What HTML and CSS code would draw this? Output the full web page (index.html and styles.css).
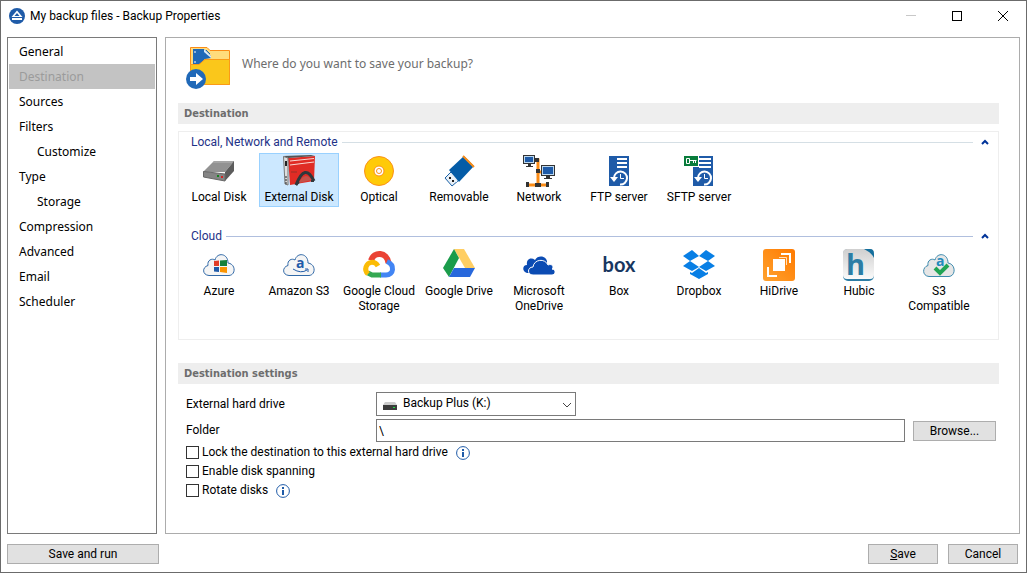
FILE: index.html
```html
<!DOCTYPE html>
<html lang="en">
<head>
    <meta charset="UTF-8">
    <meta name="viewport" content="width=device-width, initial-scale=1.0">
    <title>My backup files - Backup Properties</title>
    <link rel="stylesheet" href="styles.css">
</head>
<body>
    <div class="window">
        <header class="titlebar">
            <svg class="app-icon" width="16" height="16" viewBox="0 0 16 16">
                <circle cx="8" cy="8" r="8" fill="#1f5ba8"/>
                <path d="M8 2.500 L13.500 9 H2.500 Z" fill="#fff"/>
                <path d="M8 5 L10.500 8 H5.500 Z" fill="#1f5ba8"/>
                <rect x="3" y="10" width="10" height="2" fill="#fff"/>
            </svg>
            <h1>My backup files - Backup Properties</h1>
            <div class="window-controls">
                <button type="button" aria-label="Minimize" disabled><svg width="10" height="10"><path d="M0 4.500H10" stroke="#c8c8c8"/></svg></button>
                <button type="button" aria-label="Maximize"><svg width="10" height="10"><rect x=".5" y=".5" width="9" height="9" fill="none" stroke="#000"/></svg></button>
                <button type="button" aria-label="Close"><svg width="10" height="10"><path d="M0 0L10 10M10 0L0 10" stroke="#000"/></svg></button>
            </div>
        </header>

        <div class="content">
            <nav class="sidebar">
                <a href="#">General</a>
                <a href="#" class="active">Destination</a>
                <a href="#">Sources</a>
                <a href="#">Filters</a>
                <a href="#" class="sub">Customize</a>
                <a href="#">Type</a>
                <a href="#" class="sub">Storage</a>
                <a href="#">Compression</a>
                <a href="#">Advanced</a>
                <a href="#">Email</a>
                <a href="#">Scheduler</a>
            </nav>

            <main class="panel">
                <div class="question">
                    <svg width="44" height="42" viewBox="0 0 44 42">
                        <path d="M4.500 37.500V.500H21L24 3.500H43.500V37.500Z" fill="#ffdc7c" stroke="#fb8c16"/>
                        <path d="M7 2H18L25 9V11L19 12L14 17H7Z" fill="#2069b8"/>
                        <path d="M18 2L25 9V11L18 5Z" fill="#dceaf7"/>
                        <path d="M20 3L24 7" stroke="#2069b8"/>
                        <path d="M9 4V6M9 14V16" stroke="#fff"/>
                        <path d="M4.500 37.500V17.500H13L19 12.500H43.500V37.500Z" fill="#fac71b" stroke="#fb9a16"/>
                        <circle cx="10" cy="32" r="10" fill="#2069b8"/>
                        <path d="M4 30H10V26L17 32L10 38V34H4Z" fill="#fff"/>
                    </svg>
                    <p>Where do you want to save your backup?</p>
                </div>

                <h2 class="section-title">Destination</h2>
                <div class="destinations">
                    <div class="group-title">
                        <h3>Local, Network and Remote</h3>
                        <span class="rule"></span>
                        <button type="button" aria-label="Collapse Local, Network and Remote"><svg width="8" height="6"><path d="M1 5L4 2L7 5" fill="none" stroke="#003399" stroke-width="2"/></svg></button>
                    </div>
                    <div class="items">
                        <button type="button" class="item">
                            <svg width="32" height="32" viewBox="0 0 32 32">
                                <path d="M11 6H31L22 17H0Z" fill="#929292"/>
                                <path d="M11 6H31L29 8H10Z" fill="#a5a5a5"/>
                                <path d="M31 6V16L22 26V17Z" fill="#5c5c5c"/>
                                <path d="M.500 16.500L22 19V26L.500 22Z" fill="#858585" stroke="#686868"/>
                                <rect x="14" y="20" width="2" height="2" fill="#16831d"/>
                                <rect x="18" y="21" width="2" height="2" fill="#d22424"/>
                            </svg>
                            <span>Local Disk</span>
                        </button>
                        <button type="button" class="item selected">
                            <svg width="32" height="32" viewBox="0 0 32 32">
                                <path d="M5 3L32 1L31 26L7 30Z" fill="#e02c25"/>
                                <path d="M0 1L28 0L32 1L5 3Z" fill="#545454"/>
                                <path d="M7 6L31 3.500M7 10L31 7" stroke="#f9d8d3"/>
                                <path d="M8 17H14" stroke="#963028"/>
                                <path d="M.500 1.500L5 3V30L2 29Z" fill="#dedede" stroke="#777"/>
                                <path d="M3 6V11" stroke="#222" stroke-width="2"/>
                                <path d="M2 22H4M2 25H4M2 28H4" stroke="#222"/>
                                <path d="M16 27Q22 16 29 25L16 28Z" fill="#c4524a"/>
                                <path d="M13 30Q22 7 31 26" fill="none" stroke="#30383c" stroke-width="3"/>
                                <path d="M13 30L16 27M31 26L28 26" stroke="#30383c" stroke-width="2"/>
                            </svg>
                            <span>External Disk</span>
                        </button>
                        <button type="button" class="item">
                            <svg width="32" height="32" viewBox="0 0 32 32">
                                <circle cx="16" cy="16" r="14.500" fill="#ffca08" stroke="#fb9118"/>
                                <circle cx="16" cy="16" r="5" fill="#fff" stroke="#fb9118"/>
                                <circle cx="16" cy="16" r="2.500" fill="#fff" stroke="#fb9118"/>
                            </svg>
                            <span>Optical</span>
                        </button>
                        <button type="button" class="item">
                            <svg width="32" height="32" viewBox="0 0 32 32">
                                <path d="M2 23L8 17L16 25L9 31Z" fill="#e8eff6" stroke="#1961a7"/>
                                <path d="M6 15L21 1L31 11L16 27Z" fill="#045ca7"/>
                                <path d="M20 1L31 12" stroke="#fb8c16" stroke-width="2"/>
                                <path d="M6 22H8V24H6ZM9 25H11V27H9Z" fill="#222"/>
                                <path d="M5 18L14 27" stroke="#eef6fc"/>
                            </svg>
                            <span>Removable</span>
                        </button>
                        <button type="button" class="item">
                            <svg width="32" height="32" viewBox="0 0 32 32">
                                <path d="M13 5H15V29M15 17H18M6 30H24" fill="none" stroke="#fb8c16" stroke-width="3"/>
                                <path d="M12 3H16V7H12ZM13 14H17V18H13ZM12 28H18V32H12ZM3 27H6V32H3ZM23 27H26V32H23Z" fill="#333"/>
                                <rect x=".5" y=".5" width="11" height="8" fill="#bcd8ef" stroke="#333"/>
                                <rect x="2" y="2" width="8" height="5" fill="#1f5ba8"/>
                                <path d="M5 9H8V11H10V12H3V11H5Z" fill="#333"/>
                                <rect x="18.500" y="10.500" width="13" height="10" fill="#bcd8ef" stroke="#333"/>
                                <rect x="20" y="12" width="10" height="7" fill="#1f5ba8"/>
                                <path d="M23 21H27V23H29V24H21V23H23Z" fill="#333"/>
                            </svg>
                            <span>Network</span>
                        </button>
                        <button type="button" class="item">
                            <svg width="32" height="32" viewBox="0 0 32 32">
                                <rect x="6" y="1" width="20" height="30" fill="#1f5ba8"/>
                                <path d="M14 4H24M14 8H24M14 12H24" stroke="#fff" stroke-width="2"/>
                                <path d="M11 23A6.500 6.500 0 1 1 17 29.500" fill="none" stroke="#fff" stroke-width="2"/>
                                <path d="M7 22H15L11 27Z" fill="#fff"/>
                                <path d="M17.500 19V23.500H21" fill="none" stroke="#fff"/>
                            </svg>
                            <span>FTP server</span>
                        </button>
                        <button type="button" class="item">
                            <svg width="32" height="32" viewBox="0 0 32 32">
                                <rect x="10" y="1" width="20" height="30" fill="#1f5ba8"/>
                                <path d="M16 4H28M16 8H28M16 12H28" stroke="#fff" stroke-width="2"/>
                                <path d="M15 23A6.500 6.500 0 1 1 21 29.500" fill="none" stroke="#fff" stroke-width="2"/>
                                <path d="M11 22H19L15 27Z" fill="#fff"/>
                                <path d="M21.500 19V23.500H25" fill="none" stroke="#fff"/>
                                <path d="M0 0H16V12H0Z" fill="#fff"/>
                                <path d="M1 1H15V11H1Z" fill="#087c3b"/>
                                <path d="M3.500 3.500H6.500V8.500H3.500ZM7 5.500H13.500M10.500 6V8M12.500 6V8" fill="none" stroke="#fff"/>
                            </svg>
                            <span>SFTP server</span>
                        </button>
                    </div>

                    <div class="group-title cloud">
                        <h3>Cloud</h3>
                        <span class="rule"></span>
                        <button type="button" aria-label="Collapse Cloud"><svg width="8" height="6"><path d="M1 5L4 2L7 5" fill="none" stroke="#003399" stroke-width="2"/></svg></button>
                    </div>
                    <div class="items">
                        <button type="button" class="item">
                            <svg width="32" height="32" viewBox="0 0 32 32">
                                <path d="M6 26.500C-1 26 -1 18 5 16.500C4 11 9 9 12 11C14 3 25 4 25 14C33 15 33 26 26 26.500Z" fill="#f5f5f5" stroke="#3169a7"/>
                                <path d="M11 12L16 11.500V17H11Z" fill="#e23d28"/>
                                <path d="M17 11.500L24 11V17H17Z" fill="#16803a"/>
                                <path d="M11 18H16V23L11 22.500Z" fill="#1f5ba8"/>
                                <path d="M17 18H24V24L17 23Z" fill="#fb9400"/>
                            </svg>
                            <span>Azure</span>
                        </button>
                        <button type="button" class="item">
                            <svg width="32" height="32" viewBox="0 0 32 32">
                                <path d="M6 26.500C-1 26 -1 18 5 16.500C4 11 9 9 12 11C14 3 25 4 25 14C33 15 33 26 26 26.500Z" fill="#f5f5f5" stroke="#3169a7"/>
                                <text x="13" y="19" class="cloud-letter" fill="#1f5ba8">a</text>
                                <path d="M10 20Q18 25 24 21M22 20H25V23" fill="none" stroke="#1f5ba8"/>
                            </svg>
                            <span>Amazon S3</span>
                        </button>
                        <button type="button" class="item">
                            <svg width="32" height="32" viewBox="0 0 32 32">
                                <path d="M8 11.500C11 2 24 3 25.500 14" fill="none" stroke="#ea4335" stroke-width="6"/>
                                <path d="M24 12.500C32 16 31 26 23 26H17" fill="none" stroke="#4285f4" stroke-width="5"/>
                                <path d="M18 26H9L5 24" fill="none" stroke="#34a853" stroke-width="5"/>
                                <path d="M15 17C12 12 5 12 3 18C2 21 3 23 5 25" fill="none" stroke="#fbbc05" stroke-width="5"/>
                            </svg>
                            <span>Google Cloud Storage</span>
                        </button>
                        <button type="button" class="item">
                            <svg width="32" height="32" viewBox="0 0 32 32">
                                <path d="M11 0H21L32 19H22Z" fill="#ffce63"/>
                                <path d="M11 0L16 9L6 28L0 19Z" fill="#1b9c4b"/>
                                <path d="M11 19H32L27 28H6Z" fill="#2868dc"/>
                            </svg>
                            <span>Google Drive</span>
                        </button>
                        <button type="button" class="item">
                            <svg width="32" height="32" viewBox="0 0 32 32">
                                <path d="M4 24C-1 23 -1 16 4 16C3 10 8 8 12 11C15 5 25 7 24 14L20 24Z" fill="#0b4bb3"/>
                                <path d="M10 26C4 26 4 18 10 18C11 10 22 9 25 16C30 14 31 19 29 20C34 21 32 26 29 26Z" fill="#0b4bb3" stroke="#fff"/>
                            </svg>
                            <span>Microsoft OneDrive</span>
                        </button>
                        <button type="button" class="item">
                            <svg width="32" height="32" viewBox="0 0 32 32">
                                <text x="16" y="23" text-anchor="middle" class="box-logo">box</text>
                            </svg>
                            <span>Box</span>
                        </button>
                        <button type="button" class="item">
                            <svg width="32" height="32" viewBox="0 0 32 32" fill="#087fe5">
                                <path d="M9 1L16 7L7 12L0 7Z"/>
                                <path d="M23 1L32 7L25 12L16 7Z"/>
                                <path d="M0 17L7 12L16 18L9 22Z"/>
                                <path d="M25 12L32 17L23 22L16 18Z"/>
                                <path d="M7 23L9 24L16 19L23 24L25 23V25L16 30L7 25Z"/>
                            </svg>
                            <span>Dropbox</span>
                        </button>
                        <button type="button" class="item">
                            <svg width="32" height="32" viewBox="0 0 32 32">
                                <defs>
                                    <linearGradient id="hidrive" x1="0" y1="1" x2="1" y2="0"><stop stop-color="#ffa22e"/><stop offset="1" stop-color="#ff7a00"/></linearGradient>
                                </defs>
                                <rect width="32" height="32" rx="3" fill="url(#hidrive)"/>
                                <rect x="10" y="10" width="12" height="12" fill="#fff"/>
                                <path d="M5 18V27H14M18 5H27V14" fill="none" stroke="#fff" stroke-width="2"/>
                                <path d="M16 8.500H23.500V16" fill="none" stroke="#ffe0bd"/>
                            </svg>
                            <span>HiDrive</span>
                        </button>
                        <button type="button" class="item">
                            <svg width="32" height="32" viewBox="0 0 32 32">
                                <defs>
                                    <linearGradient id="hubic" x2="0" y2="1"><stop stop-color="#cfcfcf"/><stop offset="1" stop-color="#fafafa"/></linearGradient>
                                </defs>
                                <rect width="31" height="32" rx="5" fill="#2c7da5"/>
                                <rect width="31" height="30" rx="4" fill="url(#hubic)"/>
                                <path d="M21 0H27Q31 0 31 5V9Q29 4 21 0Z" fill="#146f9d"/>
                                <text x="3" y="26" class="hubic-letter">h</text>
                            </svg>
                            <span>Hubic</span>
                        </button>
                        <button type="button" class="item">
                            <svg width="32" height="32" viewBox="0 0 32 32">
                                <path d="M6 27.500C-1 27 -1 18 5 16.500C4 11 9 9 12 11C14 3 25 4 25 14C33 15 33 27 26 27.500Z" fill="#e6e6e6" stroke="#3c8aae"/>
                                <text x="13" y="17" class="cloud-letter" fill="#238abc">a</text>
                                <path d="M12 19L17 24L25 16" fill="none" stroke="#21a454" stroke-width="4"/>
                            </svg>
                            <span>S3<br>Compatible</span>
                        </button>
                    </div>
                </div>

                <h2 class="section-title">Destination settings</h2>
                <form class="settings">
                    <div class="field">
                        <label for="drive">External hard drive</label>
                        <div class="drive-select">
                            <svg class="drive-icon" width="14" height="8" viewBox="0 0 14 8">
                                <path d="M2 0H12L14 3H0Z" fill="#ccc"/>
                                <rect y="3" width="14" height="5" fill="#3b3b3b"/>
                                <rect x="10" y="5" width="2" height="1" fill="#1be342"/>
                            </svg>
                            <select id="drive" name="drive">
                                <option>Backup Plus (K:)</option>
                            </select>
                            <svg class="arrow" width="10" height="6"><path d="M1 1L5 5L9 1" fill="none" stroke="#444"/></svg>
                        </div>
                    </div>
                    <div class="field">
                        <label for="folder">Folder</label>
                        <input type="text" id="folder" name="folder" value="\">
                        <button type="button" class="btn btn-browse">Browse...</button>
                    </div>
                    <div class="check">
                        <input type="checkbox" id="lock">
                        <label for="lock">Lock the destination to this external hard drive</label>
                        <svg width="14" height="14" viewBox="0 0 14 14"><circle cx="7" cy="7" r="6.400" fill="#fff" stroke="#1f5ba8"/><path d="M7 3V5M7 6V11" stroke="#1f5ba8" stroke-width="2"/></svg>
                    </div>
                    <div class="check">
                        <input type="checkbox" id="spanning">
                        <label for="spanning">Enable disk spanning</label>
                    </div>
                    <div class="check">
                        <input type="checkbox" id="rotate">
                        <label for="rotate">Rotate disks</label>
                        <svg width="14" height="14" viewBox="0 0 14 14"><circle cx="7" cy="7" r="6.400" fill="#fff" stroke="#1f5ba8"/><path d="M7 3V5M7 6V11" stroke="#1f5ba8" stroke-width="2"/></svg>
                    </div>
                </form>
            </main>
        </div>

        <footer class="footer">
            <button type="button" class="btn btn-run">Save and run</button>
            <div class="actions">
                <button type="button" class="btn"><u>S</u>ave</button>
                <button type="button" class="btn">Cancel</button>
            </div>
        </footer>
    </div>
</body>
</html>
```
FILE: styles.css
```css
* {
    box-sizing: border-box;
}

body {
    margin: 0;
    font-family: Roboto, "Open Sans", sans-serif;
    font-size: 12px;
    line-height: 15px;
    color: #000;
    background: #fff;
}

h1, h2, h3, p {
    margin: 0;
    font-size: 12px;
    font-weight: normal;
}

button, input, select {
    font: inherit;
    color: inherit;
}

svg {
    display: block;
    flex-shrink: 0;
    overflow: visible;
}

.window {
    display: flex;
    flex-direction: column;
    min-height: 100vh;
    border: 1px solid #6b6b6b;
}

/* Title bar */
.titlebar {
    display: flex;
    align-items: center;
    height: 30px;
    padding-left: 8px;
}

.titlebar h1 {
    margin-left: 5px;
}

.window-controls {
    display: flex;
    margin-left: auto;
}

.window-controls button {
    display: flex;
    align-items: center;
    justify-content: center;
    width: 46px;
    height: 28px;
    padding: 0;
    border: none;
    background: none;
}

/* Sidebar and panel */
.content {
    flex: 1;
    display: flex;
    gap: 8px;
    padding: 6px 6px 0;
}

.sidebar {
    width: 150px;
    padding: 1px;
    border: 1px solid #7a7a7a;
    font-family: "Noto Sans", sans-serif;
}

.sidebar a {
    display: block;
    padding-left: 10px;
    line-height: 25px;
    color: #000;
    text-decoration: none;
}

.sidebar .sub {
    padding-left: 28px;
}

.sidebar .active {
    background: #c3c3c3;
    color: #9b9b9b;
}

.panel {
    flex: 1;
    padding: 9px 20px 9px 12px;
    border: 1px solid #acacac;
}

.question {
    display: flex;
    gap: 12px;
    margin-bottom: 14px;
    padding-left: 8px;
    color: #6d6d6d;
    font-family: "Noto Sans", sans-serif;
}

.question p {
    padding-top: 9px;
}

.section-title {
    padding-left: 6px;
    background: #eee;
    color: #6d6d6d;
    font-family: "DejaVu Sans Condensed", "Noto Sans", sans-serif;
    font-size: 11px;
    font-weight: bold;
    line-height: 21px;
}

/* Destination list */
.destinations {
    margin: 7px 0 23px;
    padding-bottom: 23px;
    border: 1px solid #eee;
}

.group-title {
    display: flex;
    align-items: center;
    gap: 4px;
    height: 20px;
    padding: 0 9px 0 12px;
    color: #1e3287;
}

.group-title.cloud {
    margin-top: 19px;
}

.group-title .rule {
    flex: 1;
    height: 1px;
    background: #d5dfe5;
}

.cloud .rule {
    background: #b0bfde;
}

.group-title button {
    margin-left: 4px;
    padding: 0;
    border: none;
    background: none;
}

.items {
    display: flex;
    flex-wrap: wrap;
    padding-top: 1px;
}

.item {
    display: flex;
    flex-direction: column;
    align-items: center;
    gap: 3px;
    width: 80px;
    padding: 1px 0;
    border: 1px solid transparent;
    background: none;
}

.item.selected {
    border-color: #99d1ff;
    background: #cce8ff;
}

.cloud-letter {
    font: bold 14px "Open Sans", sans-serif;
}

.box-logo {
    font: bold 20px Lato, sans-serif;
    fill: #18365f;
}

.hubic-letter {
    font: bold 29px "Open Sans", sans-serif;
    fill: #2c7da5;
}

/* Destination settings */
.settings {
    padding: 8px 3px 0 8px;
}

.field {
    display: flex;
    align-items: center;
    margin-bottom: 3px;
}

.field + .check {
    margin-top: -2px;
}

.field label {
    width: 190px;
}

.drive-select {
    position: relative;
    width: 200px;
}

.drive-select select {
    display: block;
    width: 100%;
    height: 24px;
    padding: 0 24px 2px 26px;
    border: 1px solid #7a7a7a;
    border-radius: 0;
    background: #fff;
    appearance: none;
}

.drive-icon {
    position: absolute;
    top: 10px;
    left: 7px;
}

.arrow {
    position: absolute;
    top: 10px;
    right: 4px;
}

.field input {
    flex: 1;
    height: 23px;
    margin-right: 8px;
    padding: 0 2px;
    border: 1px solid #7a7a7a;
}

.check {
    display: flex;
    align-items: center;
    height: 19px;
}

.check input {
    width: 13px;
    height: 13px;
    margin: 0 3px 0 0;
    border: 1px solid #333;
    background: #fff;
    appearance: none;
}

.check input:checked {
    background: #1f5ba8;
}

.check svg {
    margin-left: 8px;
}

/* Buttons */
.btn {
    width: 70px;
    height: 20px;
    padding: 0;
    border: 1px solid #adadad;
    background: #e1e1e1;
    line-height: 18px;
}

.btn-browse {
    width: 83px;
}

.btn-run {
    width: 152px;
}

.footer {
    display: flex;
    justify-content: space-between;
    padding: 10px 8px 8px 6px;
}

.actions {
    display: flex;
    gap: 10px;
}
```
